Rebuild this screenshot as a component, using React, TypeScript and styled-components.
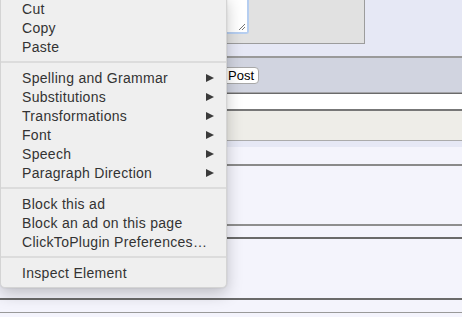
import React from 'react';
import styled, { createGlobalStyle } from 'styled-components';

const GlobalStyle = createGlobalStyle`
  html, body {
    margin: 0;
    padding: 0;
    background: #f4f4fc;
    font-family: "Liberation Sans", Arial, sans-serif;
    overflow: hidden;
  }
`;

type MenuEntry = { label: string; sub?: boolean } | 'sep';

const entries: MenuEntry[] = [
  { label: 'Cut' },
  { label: 'Copy' },
  { label: 'Paste' },
  'sep',
  { label: 'Spelling and Grammar', sub: true },
  { label: 'Substitutions', sub: true },
  { label: 'Transformations', sub: true },
  { label: 'Font', sub: true },
  { label: 'Speech', sub: true },
  { label: 'Paragraph Direction', sub: true },
  'sep',
  { label: 'Block this ad' },
  { label: 'Block an ad on this page' },
  { label: 'ClickToPlugin Preferences…' },
  'sep',
  { label: 'Inspect Element' },
];

function App() {
  return (
    <Page>
      <GlobalStyle />
      <TopArea>
        <GrayBox>
          <TextBox>
            <Grip width="8" height="8" viewBox="0 0 8 8">
              <path d="M7 1 L1 7 M7 4 L4 7" stroke="#777" strokeWidth="1" />
            </Grip>
          </TextBox>
        </GrayBox>
      </TopArea>
      <Rule $color="#9a9a9a" $size={2} />
      <Toolbar>
        <PostButton>Post</PostButton>
      </Toolbar>
      <Rule $color="#a4a4a8" $size={1} />
      <Rule $color="#6a6a6a" $size={1} />
      <Band $bg="#ffffff" $height={15} />
      <Rule $color="#777" $size={2} />
      <Band $bg="#eeede8" $height={29} />
      <Rule $color="#ababab" $size={1} />
      <Band $bg="#e6e8f5" $height={6} />
      <Band $bg="#f4f4fc" $height={17} />
      <Rule $color="#8a8a8a" $size={2} />
      <Band $bg="#f4f4fc" $height={58} />
      <Rule $color="#8e8e8e" $size={2} />
      <Band $bg="#f4f4fc" $height={11} />
      <Rule $color="#6a6a6a" $size={2} />
      <Band $bg="#f4f4fc" $height={59} />
      <Rule $color="#6a6a6a" $size={2} />
      <Band $bg="#f4f4fc" $height={12} />
      <Rule $color="#999" $size={1} />

      <Menu>
        {entries.map((e, i) =>
          e === 'sep' ? (
            <Separator key={i} />
          ) : (
            <Item key={i}>
              <span>{e.label}</span>
              {e.sub && <Arrow />}
            </Item>
          )
        )}
      </Menu>
    </Page>
  );
}

const Page = styled.div`
  position: relative;
  width: 462px;
  height: 317px;
  overflow: hidden;
  background: #f4f4fc;
`;

const TopArea = styled.div`
  height: 56px;
  background: #e6e8f5;
  display: flex;
  align-items: flex-start;
`;

const GrayBox = styled.div`
  margin-left: 120px;
  width: 243px;
  height: 43px;
  background: #e1e1e1;
  border: 1px solid #9c9c9c;
  border-top: none;
  display: flex;
  align-items: flex-start;
`;

const TextBox = styled.div`
  position: relative;
  width: 124px;
  height: 32px;
  background: #fff;
  border: 2px solid #b6cef0;
  border-top: none;
  border-radius: 0 0 3px 3px;
`;

const Grip = styled.svg`
  position: absolute;
  right: 1px;
  bottom: 1px;
`;

const Rule = styled.div<{ $color: string; $size: number }>`
  height: ${(p) => p.$size}px;
  background: ${(p) => p.$color};
`;

const Band = styled.div<{ $bg: string; $height: number }>`
  height: ${(p) => p.$height}px;
  background: ${(p) => p.$bg};
`;

const Toolbar = styled.div`
  height: 34px;
  background: #d1d4e0;
  display: flex;
  align-items: flex-start;
  padding-top: 9px;
  box-sizing: border-box;
  padding-left: 212px;
`;

const PostButton = styled.div`
  height: 15px;
  padding: 0 4px 0 15px;
  background: #fff;
  border: 1px solid #a8a8a8;
  border-radius: 4px;
  font-family: "Liberation Sans", Arial, sans-serif;
  font-size: 13px;
  line-height: 15px;
  color: #000;
`;

const Menu = styled.div`
  position: absolute;
  left: 0;
  top: -5px;
  width: 227px;
  padding: 4px 0 5px;
  background: #efefef;
  border: 1px solid #d4d4d4;
  border-top: none;
  border-radius: 0 0 5px 5px;
  box-shadow: 0 6px 16px rgba(0, 0, 0, 0.22), 0 0 2px rgba(0, 0, 0, 0.12);
  box-sizing: border-box;
`;

const Item = styled.div`
  height: 19px;
  display: flex;
  align-items: center;
  justify-content: space-between;
  padding: 0 12px 0 21px;
  font-size: 14px;
  letter-spacing: 0.3px;
  color: #333;
  white-space: nowrap;
`;

const Arrow = styled.span`
  width: 0;
  height: 0;
  border-left: 8px solid #3a3a3a;
  border-top: 4.5px solid transparent;
  border-bottom: 4.5px solid transparent;
  margin-top: 1px;
`;

const Separator = styled.div`
  height: 2px;
  margin: 5px 0;
  background: #dcdcdc;
`;

export default App;
